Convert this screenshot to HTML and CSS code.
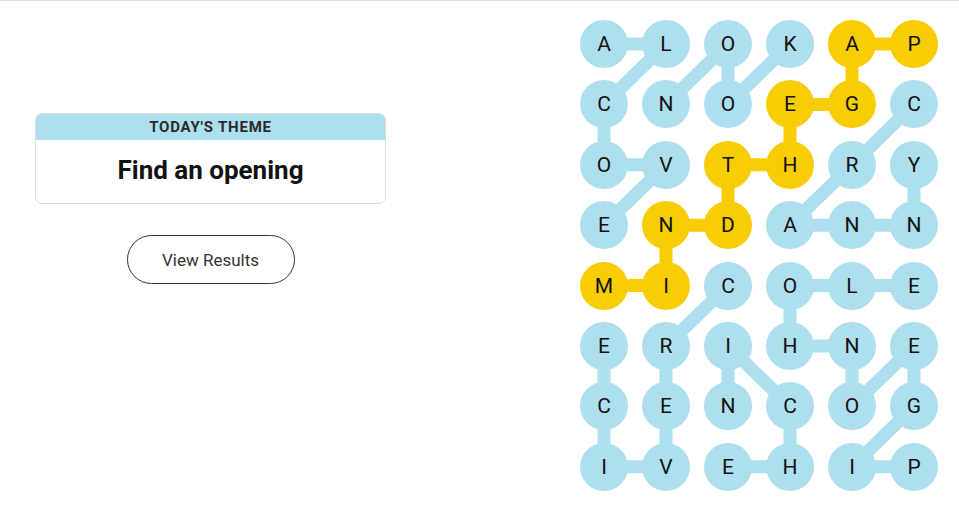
FILE: index.html
```html
<!DOCTYPE html>
<html lang="en">
<head>
    <meta charset="UTF-8">
    <meta name="viewport" content="width=device-width, initial-scale=1.0">
    <title>Strands</title>
    <link rel="stylesheet" href="styles.css">
</head>
<body>
    <main class="game">
        <section class="side">
            <div class="theme-card">
                <h2 class="theme-label">TODAY'S THEME</h2>
                <p class="theme-text">Find an opening</p>
            </div>
            <button class="results-btn">View Results</button>
        </section>

        <section class="board">
            <svg class="strands" width="358" height="471" viewBox="0 0 358 471">
                <g class="found">
                    <polyline points="24,24 86,24 24,84.4 24,144.8 86,144.8 24,205.2"/>
                    <polyline points="86,84.4 148,24 148,84.4 210,24"/>
                    <polyline points="334,84.4 272,144.8 210,205.2 272,205.2 334,205.2 334,144.8"/>
                    <polyline points="148,265.6 86,326 86,386.4 86,446.8 24,446.8 24,386.4 24,326"/>
                    <polyline points="334,446.8 272,446.8 334,386.4 334,326 272,386.4 272,326 210,326 210,265.6 272,265.6 334,265.6"/>
                    <polyline points="148,386.4 148,326 210,386.4 210,446.8 148,446.8"/>
                </g>
                <g class="spangram">
                    <polyline points="24,265.6 86,265.6 86,205.2 148,205.2 148,144.8 210,144.8 210,84.4 272,84.4 272,24 334,24"/>
                </g>
            </svg>
            <div class="letters" id="letters"></div>
        </section>
    </main>

    <script>
        const rows = ["ALOKAP", "CNOEGC", "OVTHRY", "ENDANN", "MICOLE", "ERIHNE", "CENCOG", "IVEHIP"];
        const spangram = ["0-4", "0-5", "1-3", "1-4", "2-2", "2-3", "3-1", "3-2", "4-0", "4-1"];

        const letters = document.getElementById("letters");
        rows.forEach((row, r) => {
            [...row].forEach((ch, c) => {
                const cell = document.createElement("button");
                cell.className = spangram.includes(`${r}-${c}`) ? "cell gold" : "cell";
                cell.innerText = ch;
                letters.appendChild(cell);
            });
        });
    </script>
</body>
</html>
```

FILE: styles.css
```css
body {
    margin: 0;
    border-top: 1px solid #dfdfdf;
    font-family: Roboto, "Liberation Sans", sans-serif;
    color: #121212;
    background: #fff;
}
.game {
    display: flex;
    justify-content: space-between;
    padding: 19px 21px 0 35px;
}
.side {
    width: 351px;
    display: flex;
    flex-direction: column;
    align-items: center;
    padding-top: 93px;
}
.theme-card {
    width: 100%;
    border: 1px solid #dcdcdc;
    border-radius: 7px;
    overflow: hidden;
    text-align: center;
    box-sizing: border-box;
}
.theme-label {
    margin: 0;
    background: #aedfee;
    height: 26px;
    line-height: 27px;
    font-size: 15px;
    font-weight: 700;
    letter-spacing: 0.8px;
    color: #2b2b2b;
}
.theme-text {
    margin: 0;
    height: 63px;
    line-height: 60px;
    font-size: 26px;
    font-weight: 700;
}
.results-btn {
    margin-top: 31px;
    width: 168px;
    height: 49px;
    border: 1.5px solid #333;
    border-radius: 25px;
    background: #fff;
    font-family: inherit;
    font-size: 17px;
    color: #333;
    cursor: pointer;
}
.board {
    position: relative;
    width: 358px;
    height: 471px;
}
.strands {
    position: absolute;
    left: 0;
    top: 0;
}
.strands polyline {
    fill: none;
    stroke-width: 13;
    stroke-linejoin: round;
    stroke-linecap: round;
}
.found polyline {
    stroke: #aedfee;
}
.spangram polyline {
    stroke: #f8cd05;
}
.letters {
    position: relative;
    display: grid;
    grid-template-columns: repeat(6, 48px);
    grid-auto-rows: 48px;
    column-gap: 14px;
    row-gap: 12.4px;
}
.cell {
    width: 48px;
    height: 48px;
    border: none;
    border-radius: 50%;
    padding: 0;
    background: #aedfee;
    font-family: Roboto, "Liberation Sans", sans-serif;
    font-size: 21px;
    color: #121212;
    cursor: pointer;
}
.cell.gold {
    background: #f8cd05;
}
```
